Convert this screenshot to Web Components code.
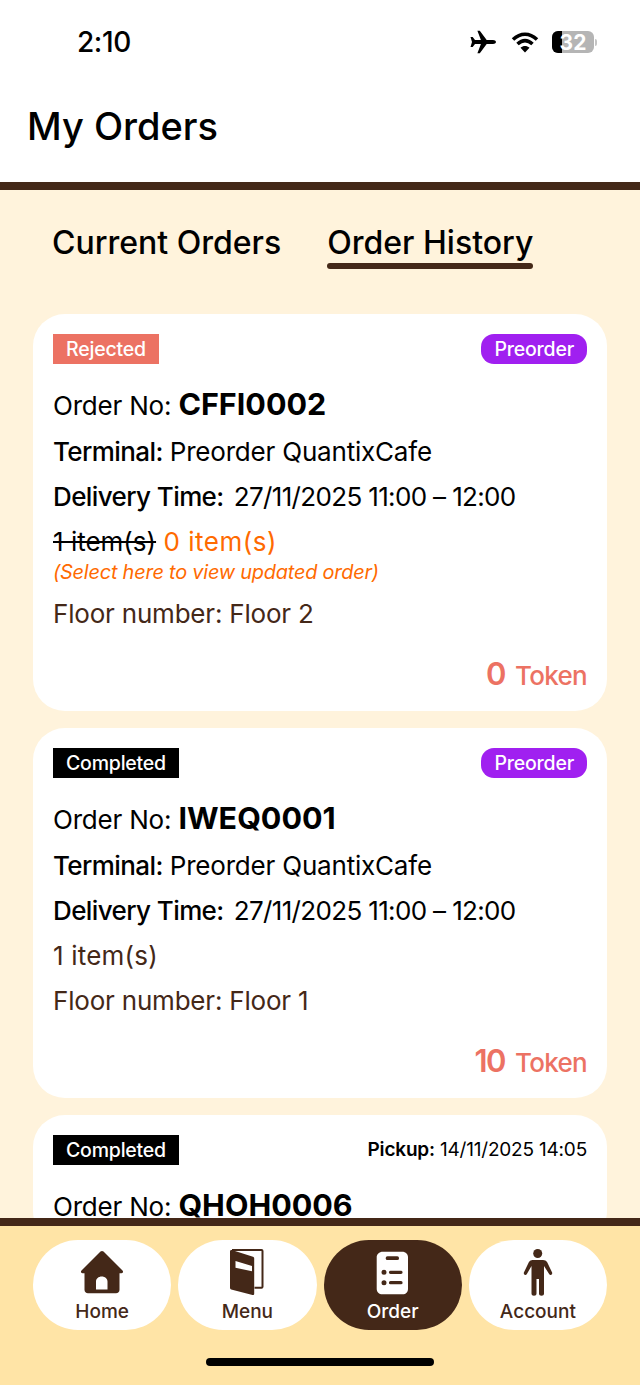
<!DOCTYPE html>
<html>
<head>
<meta charset="utf-8">
<style>
  html, body { margin: 0; padding: 0; height: 100%; }
  body { width: 640px; height: 1385px; overflow: hidden; font-family: "Inter", "Noto Sans", sans-serif; }
</style>
</head>
<body>
<app-shell>
  <status-bar></status-bar>
  <page-title>My Orders</page-title>
  <order-tabs></order-tabs>
  <order-card status="Rejected" status-color="#ec7263" order="CFFI0002" terminal="Preorder QuantixCafe" delivery="27/11/2025 11:00 – 12:00" floor="Floor 2" token="0" updated preorder></order-card>
  <order-card status="Completed" status-color="#000" order="IWEQ0001" terminal="Preorder QuantixCafe" delivery="27/11/2025 11:00 – 12:00" floor="Floor 1" token="10" preorder></order-card>
  <order-card status="Completed" status-color="#000" order="QHOH0006" pickup="14/11/2025 14:05"></order-card>
  <bottom-nav slot="nav"></bottom-nav>
</app-shell>

<script>
class AppShell extends HTMLElement {
    constructor() {
        super();
        this.attachShadow({mode: 'open'}).innerHTML = `
        <style>
          :host { display: flex; flex-direction: column; width: 640px; height: 1385px; background: #fff3dc; color: #000; }
          main { flex: 1; min-height: 0; overflow: hidden; display: flex; flex-direction: column; }
        </style>
        <main><slot></slot></main>
        <slot name="nav"></slot>`;
    }
}
customElements.define('app-shell', AppShell);

class StatusBar extends HTMLElement {
    constructor() {
        super();
        this.attachShadow({mode: 'open'}).innerHTML = `
        <style>
          :host { display: flex; align-items: center; justify-content: space-between; flex: none; height: 84px; background: #fff; box-sizing: border-box; padding: 0 43px 0 77px; }
          .time { font-size: 28px; font-weight: 500; letter-spacing: -0.4px; color: #000; }
          .icons { display: flex; align-items: center; gap: 13px; }
          svg { display: block; }
          .plane { margin-right: 1px; }
          .battery { position: relative; width: 42px; height: 22px; border-radius: 6px; overflow: hidden; background: #b5b5b5; }
          .battery i { display: block; width: 10px; height: 100%; background: #000; }
          .battery span { position: absolute; inset: 0; display: flex; align-items: center; justify-content: center; color: #fff; font-size: 21px; font-weight: 700; line-height: 1; }
          .cap { width: 2px; height: 7px; background: #c4c4c4; border-radius: 0 2px 2px 0; margin-left: -12px; }
        </style>
        <span class="time">2:10</span>
        <div class="icons">
          <svg class="plane" width="28" height="24" viewBox="0 0 28 24"><path fill="#000" d="M27 12c0-1.300-1.500-2-3-2h-6.300L10.800 0.800H8.400L11.900 10H6L3.700 7.100H1.500L3 12 1.500 16.900h2.200L6 14h5.900L8.400 23.200h2.400L17.700 14H24c1.500 0 3-.7 3-2z"/></svg>
          <svg width="28" height="22" viewBox="0 0 28 22"><path fill="none" stroke="#000" stroke-width="3.600" d="M2 8.500C9.500 1.500 18.500 1.500 26 8.500M6.500 13c5-4.500 10-4.500 15 0"/><path fill="#000" d="M14 21.500 9.500 16.800c2.800-2.300 6.200-2.300 9 0z"/></svg>
          <div class="battery"><i></i><span>32</span></div>
          <div class="cap"></div>
        </div>`;
    }
}
customElements.define('status-bar', StatusBar);

class PageTitle extends HTMLElement {
    constructor() {
        super();
        this.attachShadow({mode: 'open'}).innerHTML = `
        <style>
          :host { display: flex; align-items: center; flex: none; height: 84px; padding: 0 0 14px 27px; background: #fff; border-bottom: 8px solid #442818; font-size: 38px; font-weight: 500; color: #000; }
        </style>
        <slot></slot>`;
    }
}
customElements.define('page-title', PageTitle);

class OrderTabs extends HTMLElement {
    constructor() {
        super();
        this.attachShadow({mode: 'open'}).innerHTML = `
        <style>
          :host { display: flex; align-items: flex-start; flex: none; gap: 46px; padding: 33px 0 0 52px; height: 91px; font-size: 32px; font-weight: 500; line-height: 40px; color: #000; }
          .on::after { content: ""; display: block; height: 6px; border-radius: 3px; background: #442818; }
        </style>
        <div>Current Orders</div>
        <div class="on">Order History</div>`;
    }
}
customElements.define('order-tabs', OrderTabs);

// One order in the list, everything comes from attributes
class OrderCard extends HTMLElement {
    constructor() {
        super();
        var shadow = this.attachShadow({mode: 'open'});
        var a = (n) => this.getAttribute(n);
        var items = this.hasAttribute('updated')
            ? `<div class="items"><s>1 item(s)</s> <span class="orange">0 item(s)</span></div>
               <div class="hint">(Select here to view updated order)</div>`
            : `<div class="items">1 item(s)</div>`;
        var side = this.hasAttribute('preorder')
            ? `<span class="pill">Preorder</span>`
            : `<span class="pickup"><b>Pickup:</b> ${a('pickup')}</span>`;
        // third card runs under the nav, only its first rows are on screen
        var rest = this.hasAttribute('terminal') ? `
        <div class="row"><b>Terminal:</b> ${a('terminal')}</div>
        <div><b>Delivery Time:</b> <span class="date">${a('delivery')}</span></div>
        ${items}
        <div class="floor">Floor number: ${a('floor')}</div>
        <div class="token"><b>${a('token')}</b> <span>Token</span></div>` : '';
        shadow.innerHTML = `
        <style>
          :host { display: block; flex: none; margin: 0 33px 17px; padding: 20px 20px 13px; background: #fff; border-radius: 32px; font-size: 26px; line-height: 45px; color: #000; letter-spacing: -0.2px; }
          .top { display: flex; align-items: center; justify-content: space-between; height: 30px; margin-bottom: 17px; }
          .status { height: 30px; line-height: 30px; padding: 0 13px; color: #fff; font-size: 19.500px; font-weight: 500; }
          .pill { height: 30px; line-height: 30px; padding: 0 13px; border-radius: 13px; background: #a020f0; color: #fff; font-size: 19.500px; font-weight: 500; }
          .pickup { font-size: 19px; line-height: 30px; }
          .pickup b { font-weight: 600; letter-spacing: -0.2px; }
          .order { margin-bottom: 1px; }
          .order b { font-size: 30.500px; font-weight: 700; letter-spacing: 0; }
          b { font-weight: 500; letter-spacing: -0.6px; }
          .date { letter-spacing: -0.650px; margin-left: 3px; }
          .items, .floor { color: #442818; }
          .items { letter-spacing: 0.2px; }
          .items s { color: #000; letter-spacing: 0; }
          .orange { color: #ff6a00; letter-spacing: 0.5px; }
          .hint { color: #ff6a00; font-size: 19.900px; font-style: italic; line-height: 16px; margin: 0 0 11px; }
          .token { display: flex; justify-content: flex-end; align-items: baseline; gap: 10px; margin-top: 15px; color: #ec7263; font-weight: 500; }
          .token b { font-size: 31px; font-weight: 600; letter-spacing: -1.500px; }
          .token span { letter-spacing: -0.7px; }
        </style>
        <div class="top"><span class="status" style="background:${a('status-color')}">${a('status')}</span>${side}</div>
        <div class="order">Order No: <b>${a('order')}</b></div>
        ${rest}`;
    }
}
customElements.define('order-card', OrderCard);

class NavItem extends HTMLElement {
    constructor() {
        super();
        this.attachShadow({mode: 'open'}).innerHTML = `
        <style>
          :host { display: flex; flex-direction: column; align-items: center; width: 139px; height: 90px; box-sizing: border-box; padding-top: 9px; border-radius: 45px; background: #fff; color: #442818; font-size: 19px; font-weight: 500; line-height: 24px; }
          :host([active]) { background: #442818; color: #fff; }
          ::slotted(svg) { display: block; height: 48px; width: 48px; margin-bottom: 3px; }
        </style>
        <slot name="icon"></slot><span>${this.getAttribute('label')}</span>`;
    }
}
customElements.define('nav-item', NavItem);

class BottomNav extends HTMLElement {
    constructor() {
        super();
        this.attachShadow({mode: 'open'}).innerHTML = `
        <style>
          :host { display: flex; flex-direction: column; flex: none; height: 159px; border-top: 8px solid #442818; background: #ffe4a6; }
          .row { display: flex; gap: 7px; padding: 14px 33px 0; }
          .home { width: 228px; height: 8px; margin: 28px auto 0; border-radius: 4px; background: #000; }
        </style>
        <div class="row"><slot></slot></div>
        <div class="home"></div>`;
        this.innerHTML = `
        <nav-item label="Home"><svg slot="icon" viewBox="0 0 48 48"><path fill="#442818" fill-rule="evenodd" d="M22.500 2.600c.9-.8 2.100-.8 3 0L44.500 21.500c1.200 1.300.4 2.800-1 2.800h-2v16.500c0 2-1.500 3.500-3.500 3.500H10c-2 0-3.500-1.500-3.500-3.500V24.300h-2c-1.400 0-2.200-1.500-1-2.800zM18 40.500H29.500V32.500c0-2.800-2.500-5-5.750-5S18 29.700 18 32.500z"/></svg></nav-item>
        <nav-item label="Menu"><svg slot="icon" viewBox="0 0 48 48"><path fill="none" stroke="#442818" stroke-width="2" d="M9 1h29.500a1 1 0 0 1 1 1v35.700a1 1 0 0 1-1 1h-7"/><path fill="#442818" fill-rule="evenodd" d="M7 2.500c0-1 .8-1.700 1.800-1.400L30 7.800c.8.300 1.200.8 1.200 1.700V44.800c0 1-.8 1.500-1.700 1.200L8.200 40.500C7.400 40.200 7 39.700 7 38.800zM12.500 12v6.700L29 22.200v-5.200z" /></svg></nav-item>
        <nav-item label="Order" active><svg slot="icon" viewBox="0 0 48 48"><path fill="#fff" fill-rule="evenodd" d="M14 2.700h19c4 0 6 2.500 6 5.500v31.600c0 3.500-2 5.500-5.500 5.500h-20C10 45.300 7.700 43.300 7.700 39.800V8.200C7.700 5.200 10 2.700 14 2.700zM18.500 7.300a1.850 1.850 0 0 0 0 3.700H28.200a1.850 1.850 0 0 0 0-3.700zM21.500 21.700a1.600 1.600 0 0 0 0 3.200H32a1.600 1.600 0 0 0 0-3.200zM21.500 32.100a1.600 1.600 0 0 0 0 3.200H32a1.600 1.600 0 0 0 0-3.200zM15 20.800a2.500 2.500 0 1 0 0 5 2.500 2.500 0 0 0 0-5zM15 31.200a2.500 2.500 0 1 0 0 5 2.500 2.500 0 0 0 0-5z"/></svg></nav-item>
        <nav-item label="Account"><svg slot="icon" viewBox="0 0 48 48"><circle cx="23.700" cy="4.500" r="4.500" fill="#442818"/><path fill="#442818" d="M18.500 11h10.500c1.800 0 3.200.8 4.200 2.300l4.800 10c.5 1.100.2 2-.6 2.400-.9.500-1.700.1-2.300-.8L30 17v27.500c0 1.300-1 2.300-2.500 2.300S25 45.800 25 44.500V30h-2.500v14.500c0 1.300-1 2.300-2.500 2.300s-2.500-1-2.500-2.300V17l-4.600 7.900c-.6.900-1.400 1.300-2.300.8-.8-.4-1.100-1.300-.6-2.400l4.800-10c1-1.500 2.400-2.300 3.700-2.300z"/></svg></nav-item>`;
    }
}
customElements.define('bottom-nav', BottomNav);
</script>
</body>
</html>
